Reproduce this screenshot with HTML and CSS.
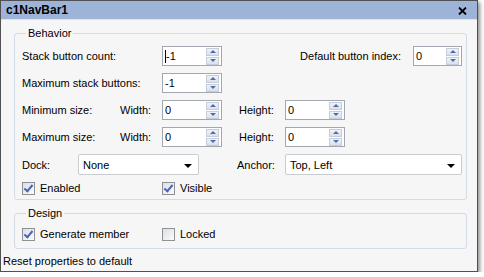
FILE: index.html
```html
<!DOCTYPE html>
<html lang="en">
<head>
    <meta charset="UTF-8">
    <title>c1NavBar1</title>
    <link rel="stylesheet" href="styles.css">
</head>
<body>
    <div class="window">
        <div class="titlebar">
            <span class="title">c1NavBar1</span>
            <svg class="close" width="9" height="8" viewBox="0 0 9 8">
                <path d="M1 0.5 L8 7.5 M8 0.5 L1 7.5" stroke="#000" stroke-width="1.8"/>
            </svg>
        </div>
        <div class="content">
            <fieldset class="group behavior">
                <legend>Behavior</legend>
                <div class="row">
                    <span class="lbl w140">Stack button count:</span>
                    <div class="spin"><span class="val"><span class="caret"></span>-1</span><span class="btns"><span class="up"></span><span class="dn"></span></span></div>
                    <div class="right">
                        <span class="lbl">Default button index:</span>
                        <div class="spin narrow"><span class="val">0</span><span class="btns"><span class="up"></span><span class="dn"></span></span></div>
                    </div>
                </div>
                <div class="row">
                    <span class="lbl w140">Maximum stack buttons:</span>
                    <div class="spin"><span class="val">-1</span><span class="btns"><span class="up"></span><span class="dn"></span></span></div>
                </div>
                <div class="row">
                    <span class="lbl w98">Minimum size:</span>
                    <span class="lbl w42">Width:</span>
                    <div class="spin"><span class="val">0</span><span class="btns"><span class="up"></span><span class="dn"></span></span></div>
                    <span class="lbl w46 gap17">Height:</span>
                    <div class="spin"><span class="val">0</span><span class="btns"><span class="up"></span><span class="dn"></span></span></div>
                </div>
                <div class="row">
                    <span class="lbl w98">Maximum size:</span>
                    <span class="lbl w42">Width:</span>
                    <div class="spin"><span class="val">0</span><span class="btns"><span class="up"></span><span class="dn"></span></span></div>
                    <span class="lbl w46 gap17">Height:</span>
                    <div class="spin"><span class="val">0</span><span class="btns"><span class="up"></span><span class="dn"></span></span></div>
                </div>
                <div class="row combo-row">
                    <span class="lbl w56">Dock:</span>
                    <div class="combo dock"><span>None</span><span class="arrow"></span></div>
                    <span class="lbl w48 gap38">Anchor:</span>
                    <div class="combo anchor"><span>Top, Left</span><span class="arrow"></span></div>
                </div>
                <div class="row check-row">
                    <label class="check w140"><span class="box checked"></span>Enabled</label>
                    <label class="check"><span class="box checked"></span>Visible</label>
                </div>
            </fieldset>
            <fieldset class="group design">
                <legend>Design</legend>
                <div class="row check-row">
                    <label class="check w140"><span class="box checked"></span>Generate member</label>
                    <label class="check"><span class="box"></span>Locked</label>
                </div>
            </fieldset>
            <div class="footer">Reset properties to default</div>
        </div>
    </div>
</body>
</html>
```

FILE: styles.css
```css
body {
    margin: 0;
    background: #fff;
    font-family: "Liberation Sans", Arial, sans-serif;
    font-size: 11px;
    color: #000;
}
.window {
    width: 476px;
    height: 270px;
    border: 1px solid #505050;
    box-shadow: 2px 2px 4px rgba(0,0,0,0.45);
    background: #f6f6f6;
    display: flex;
    flex-direction: column;
}
.titlebar {
    height: 18px;
    background: #9db4d8;
    border-bottom: 1px solid #dde3ec;
    display: flex;
    align-items: center;
    justify-content: space-between;
    padding: 0 10px 0 5px;
}
.title {
    font-weight: bold;
    font-size: 12px;
}
.close {
    margin-top: 1px;
}
.content {
    flex: 1;
    display: flex;
    flex-direction: column;
}
.group {
    margin: 0 10px 0 13px;
    border: 1px solid #d3dbe8;
    border-radius: 3px;
    padding: 6px 4px 4px 7px;
    min-width: 0;
}
.group legend {
    padding: 0 2px;
    margin-left: 4px;
    line-height: 13px;
}
.behavior {
    margin-top: 7px;
}
.design {
    margin-top: 7px;
    padding-top: 7px;
    padding-bottom: 7px;
}
.row {
    display: flex;
    align-items: center;
    height: 20px;
    margin-bottom: 7px;
}
.combo-row {
    height: 21px;
    margin-bottom: 6px;
}
.check-row {
    height: 14px;
    margin-bottom: 0;
}
.lbl {
    white-space: nowrap;
}
.w140 { width: 140px; }
.w98 { width: 98px; }
.w42 { width: 42px; }
.w46 { width: 46px; }
.w48 { width: 48px; }
.w56 { width: 56px; }
.gap17 { margin-left: 17px; }
.gap38 { margin-left: 38px; }
.right {
    margin-left: auto;
    display: flex;
    align-items: center;
    gap: 12px;
}
.spin {
    box-sizing: border-box;
    width: 60px;
    height: 20px;
    background: #fff;
    border: 1px solid #a3a8b0;
    display: flex;
    align-items: center;
    justify-content: space-between;
    padding: 0 2px 0 2px;
}
.spin.narrow {
    width: 49px;
}
.val {
    display: flex;
    align-items: center;
}
.caret {
    width: 1px;
    height: 13px;
    background: #000;
    margin-right: 0;
}
.btns {
    display: flex;
    flex-direction: column;
    gap: 1px;
}
.btns span {
    box-sizing: border-box;
    width: 13px;
    height: 8px;
    background: linear-gradient(#f0f3f8, #d9e0ec);
    border: 1px solid #c5cdd9;
    display: flex;
    align-items: center;
    justify-content: center;
}
.btns .up::after,
.btns .dn::after {
    content: "";
    border-left: 3px solid transparent;
    border-right: 3px solid transparent;
}
.btns .up::after {
    border-bottom: 3px solid #4d6eae;
}
.btns .dn::after {
    border-top: 3px solid #4d6eae;
}
.combo {
    box-sizing: border-box;
    height: 21px;
    background: #fff;
    border: 1px solid #c9ccd1;
    border-radius: 2px;
    display: flex;
    align-items: center;
    justify-content: space-between;
    padding: 0 6px 0 4px;
}
.combo.dock {
    width: 121px;
}
.combo.anchor {
    flex: 1;
}
.arrow {
    margin-top: 2px;
    border-left: 4px solid transparent;
    border-right: 4px solid transparent;
    border-top: 4px solid #000;
}
.check {
    display: flex;
    align-items: center;
    gap: 5px;
}
.box {
    box-sizing: border-box;
    width: 13px;
    height: 13px;
    border: 1px solid #8e9297;
    background: linear-gradient(135deg, #dcdfe4, #fbfbfb);
    position: relative;
}
.box.checked::after {
    content: "";
    position: absolute;
    left: 3px;
    top: 0px;
    width: 3px;
    height: 7px;
    border-right: 2px solid #4a64b8;
    border-bottom: 2px solid #4a64b8;
    transform: rotate(40deg);
}
.footer {
    margin-top: auto;
    height: 20px;
    display: flex;
    align-items: center;
    padding-left: 2px;
}
```
